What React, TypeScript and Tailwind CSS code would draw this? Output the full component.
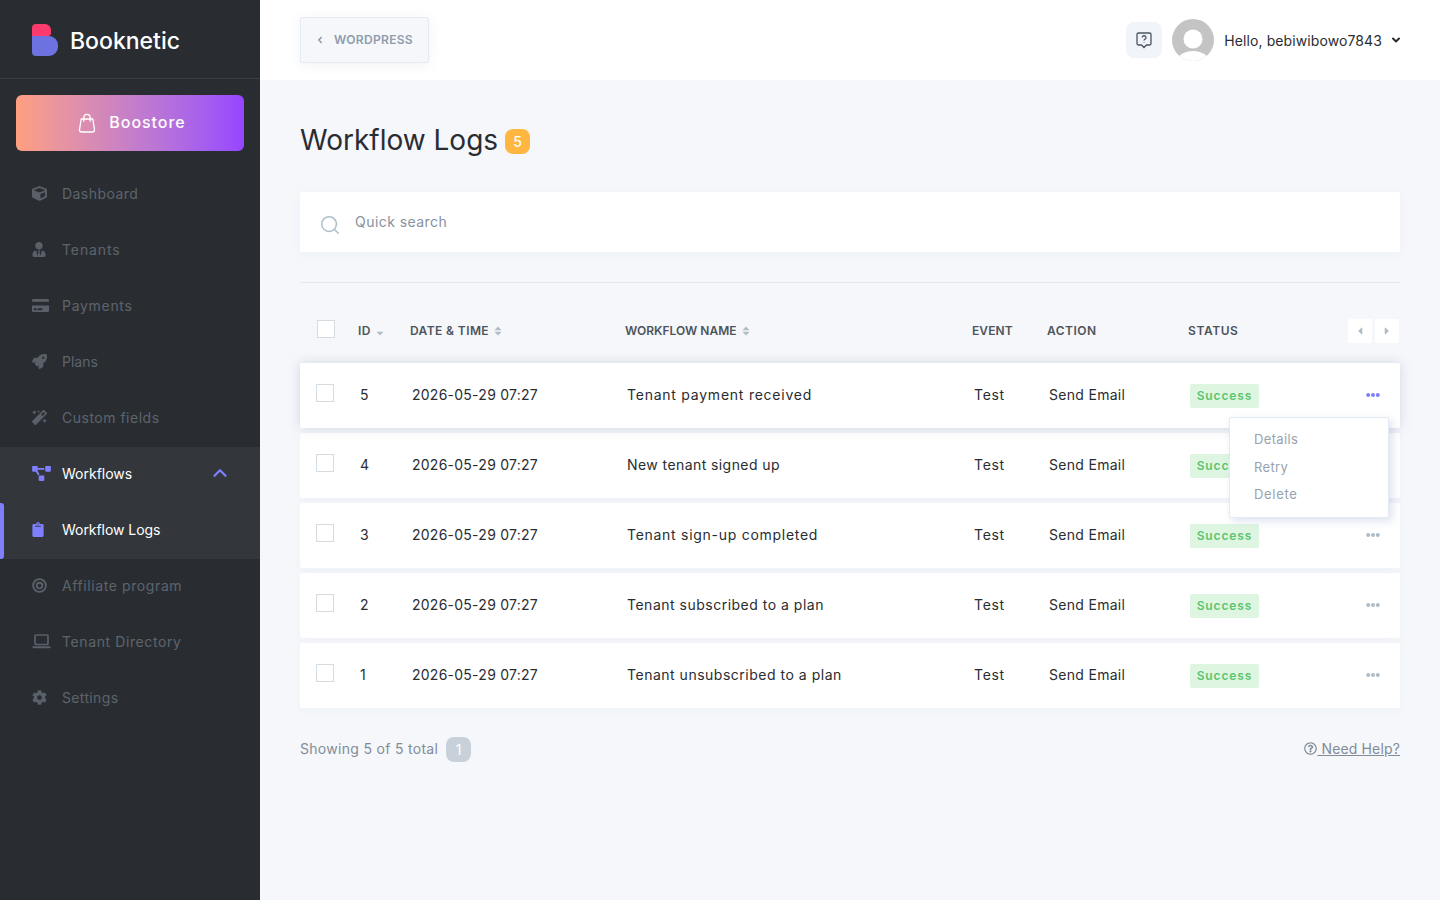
import React from "react";
import { ChevronUp, ChevronDown, ChevronLeft, Search } from "lucide-react";
import { FaCube, FaUserTie, FaCreditCard, FaRocket, FaMagic, FaProjectDiagram, FaClipboard, FaCog, FaEllipsisH, FaCaretLeft, FaCaretRight, FaRegQuestionCircle } from "react-icons/fa";

const font = "font-['Inter',sans-serif]";

function TargetIcon() {
  return (
    <svg width="15" height="15" viewBox="0 0 16 16" fill="none" stroke="#596068">
      <circle cx="8" cy="8" r="6.8" strokeWidth="2" />
      <circle cx="8" cy="8" r="3" strokeWidth="2" />
    </svg>
  );
}

function LaptopIcon() {
  return (
    <svg width="19" height="15" viewBox="0 0 19 15" fill="none">
      <rect x="3" y="1" width="13" height="9.5" rx="1" stroke="#596068" strokeWidth="1.7" />
      <path d="M0.5 12.2H18.5V13a1.2 1.2 0 0 1-1.2 1.2H1.7A1.2 1.2 0 0 1 .5 13Z" fill="#596068" />
    </svg>
  );
}

const iconCls = "w-[17px] h-[17px]";
const top = [
  { label: "Dashboard", track: "tracking-[0.45px]", icon: <FaCube className="w-[15px] h-[15px]" /> },
  { label: "Tenants", track: "tracking-[0.9px]", icon: <FaUserTie className="w-[14px] h-[15px]" /> },
  { label: "Payments", track: "tracking-[0.7px]", icon: <FaCreditCard className={iconCls} /> },
  { label: "Plans", track: "tracking-[0px]", icon: <FaRocket className="w-[15px] h-[15px]" /> },
  { label: "Custom fields", track: "tracking-[0.5px]", icon: <FaMagic className="w-[15px] h-[15px]" /> },
];
const bottom = [
  { label: "Affiliate program", track: "tracking-[0.6px]", icon: <TargetIcon /> },
  { label: "Tenant Directory", track: "tracking-[0.6px]", icon: <LaptopIcon /> },
  { label: "Settings", track: "tracking-[0.35px]", icon: <FaCog className="w-[15px] h-[15px]" /> },
];

function NavItem({ label, icon, track }: { label: string; icon: React.ReactNode; track: string }) {
  return (
    <div className="h-14 pl-8 pb-[4px] flex items-center text-[#596068]">
      <span className="w-[30px] flex items-center shrink-0">{icon}</span>
      <span className={`text-[14px] text-[#5d646c] ${track}`}>{label}</span>
    </div>
  );
}

function Sort({ only }: { only?: boolean }) {
  return (
    <svg width="8" height="10" viewBox="0 0 8 10" fill="#adbcc6" className="ml-[5px]">
      {!only && <path d="M4 0.5 7.5 4.2H0.5Z" />}
      <path d="M4 9.5 7.5 5.8H0.5Z" />
    </svg>
  );
}

const rows = [
  ["5", "Tenant payment received", "tracking-[0.76px]"],
  ["4", "New tenant signed up", "tracking-[0.42px]"],
  ["3", "Tenant sign-up completed", "tracking-[0.72px]"],
  ["2", "Tenant subscribed to a plan", "tracking-[0.5px]"],
  ["1", "Tenant unsubscribed to a plan", "tracking-[0.51px]"],
];

function Row({ id, name, track, active }: { id: string; name: string; track: string; active?: boolean }) {
  return (
    <div className={`relative h-[65px] bg-white rounded-[2px] flex items-center pl-4 text-[14px] text-[#292d32] ${active ? "shadow-[0_0_12px_rgba(90,100,130,0.22)] z-10" : "shadow-[0_2px_8px_rgba(120,130,160,0.05)]"}`}>
      <span className="w-11 shrink-0"><span className="block w-[18px] h-[18px] border border-[#d4dbe1] -mt-[5px]" /></span>
      <span className="w-[52px] shrink-0 mb-[2px]">{id}</span>
      <span className="w-[215px] shrink-0 mb-[2px] tracking-[0.25px]">2026-05-29 07:27</span>
      <span className={`w-[347px] shrink-0 mb-[2px] ${track}`}>{name}</span>
      <span className="w-[75px] shrink-0 mb-[2px] tracking-[0.7px]">Test</span>
      <span className="w-[141px] shrink-0 mb-[2px] tracking-[0.3px]">Send Email</span>
      <span className="w-[69px] h-6 shrink-0 bg-[#def6e1] rounded-[2px] flex items-center justify-center text-[12px] font-semibold text-[#5bc46f] tracking-[0.9px]">Success</span>
      <span className={`ml-[107px] mb-[2px] ${active ? "text-[#7f7ffb]" : "text-[#adbcc6]"}`}><FaEllipsisH className="w-[14px] h-[14px]" /></span>
      {active && (
        <div className="absolute z-20 top-[54px] right-[11px] w-[160px] h-[101px] bg-white border border-[#e4eaf3] rounded-[2px] shadow-[3px_3px_8px_rgba(120,140,190,0.25)] pl-6 pt-3 text-[13px] text-[#97a2b0]">
          <div className="h-[19px] leading-[19px] tracking-[0.35px]">Details</div>
          <div className="h-[19px] leading-[19px] mt-[9px] tracking-[0.35px]">Retry</div>
          <div className="h-[19px] leading-[19px] mt-[8px] tracking-[0.7px]">Delete</div>
        </div>
      )}
    </div>
  );
}

function HeadCell({ w, children }: { w: string; children: React.ReactNode }) {
  return <span className={`${w} shrink-0 flex items-center`}>{children}</span>;
}

export default function App() {
  return (
    <div className={`${font} flex w-full min-h-[900px] bg-[#f5f7fb]`}>
      <aside className="w-[260px] shrink-0 bg-[#292d32] min-h-[900px]">
        <div className="h-[79px] border-b border-[#3a3e43] pl-8 flex items-center">
          <svg width="26" height="32" viewBox="0 0 26 32" className="mr-3 mt-[1px]">
            <path d="M0 12H17a9 9 0 0 1 9 9v2a9 9 0 0 1-9 9H4a4 4 0 0 1-4-4Z" fill="#6c72e0" />
            <path d="M4 0H13a6 6 0 0 1 6 6v3a3 3 0 0 1-3 3H0V4a4 4 0 0 1 4-4Z" fill="#fb3a6e" />
          </svg>
          <span className="text-[23px] font-medium text-white leading-none mt-[5px]">Booknetic</span>
        </div>
        <div className="mx-4 mt-4 h-14 pl-1 pb-[3px] rounded-[6px] bg-gradient-to-r from-[#ff9f7f] to-[#9645ff] flex items-center justify-center text-white">
          <svg width="18" height="20" viewBox="0 0 18 20" fill="none" stroke="currentColor" strokeWidth="1.3" className="mr-[13px] mt-[2px]">
            <path d="M3.2 6h11.6l1.7 10.6a2 2 0 0 1-2 2.4H3.5a2 2 0 0 1-2-2.4Z" strokeLinejoin="round" />
            <path d="M5.8 8.2V4.5a3.2 3.2 0 0 1 6.4 0v3.7" strokeLinecap="round" />
          </svg>
          <span className="text-[16px] font-medium tracking-[0.95px]">Boostore</span>
        </div>
        <nav className="mt-4">
          {top.map((n) => <NavItem key={n.label} {...n} />)}
          <div className="h-14 pl-8 pr-[29px] pb-[4px] flex items-center bg-[#33373c] text-[#7f7ffb]">
            <span className="w-[30px] flex items-center shrink-0"><FaProjectDiagram className="w-[19px] h-[15px]" /></span>
            <span className="text-[14px] tracking-[0px] text-white flex-1">Workflows</span>
            <ChevronUp className="w-[22px] h-[22px]" strokeWidth={2.5} />
          </div>
          <div className="relative h-14 pl-8 pb-[4px] flex items-center bg-[#33373c] text-[#7f7ffb]">
            <span className="absolute left-0 top-0 bottom-0 w-1 rounded-r-[3px] bg-[#7f7ffb]" />
            <span className="w-[30px] flex items-center shrink-0"><FaClipboard className="w-[12px] h-[15px]" /></span>
            <span className="text-[14px] tracking-[-0.05px] text-white">Workflow Logs</span>
          </div>
          {bottom.map((n) => <NavItem key={n.label} {...n} />)}
        </nav>
      </aside>

      <main className="flex-1 min-w-0">
        <header className="h-20 bg-white pl-10 pr-10 flex items-center justify-between">
          <div className="w-[129px] h-[46px] bg-[#f5f7fb] border border-[#e6ebf3] rounded-[2px] shadow-[0_2px_12px_rgba(120,130,170,0.1)] flex items-center pl-[14px] text-[#8f9cab]">
            <ChevronLeft className="w-[10px] h-[10px] mr-[9px]" strokeWidth={4} />
            <span className="text-[12px] font-semibold tracking-[0.3px]">WORDPRESS</span>
          </div>
          <div className="flex items-center">
            <div className="w-9 h-9 rounded-[8px] bg-[#f1f4f9] flex items-center justify-center">
              <svg width="18" height="18" viewBox="0 0 18 18" fill="none" stroke="#4a5560" strokeWidth="1.3">
                <path d="M3.5 2h11A1.5 1.5 0 0 1 16 3.5v9a1.5 1.5 0 0 1-1.5 1.5h-3L9 16.5 6.5 14h-3A1.5 1.5 0 0 1 2 12.5v-9A1.5 1.5 0 0 1 3.5 2Z" />
                <path d="M7.2 6.6a1.9 1.9 0 1 1 2.6 1.8c-.6.3-.8.6-.8 1.2" />
                <path d="M9 11.2v.6" />
              </svg>
            </div>
            <svg width="42" height="42" viewBox="0 0 42 42" className="ml-[10px]">
              <defs><clipPath id="av"><circle cx="21" cy="21" r="21" /></clipPath></defs>
              <g clipPath="url(#av)">
                <rect width="42" height="42" fill="#c4c4c4" />
                <circle cx="21" cy="20" r="9.5" fill="#fff" />
                <ellipse cx="21" cy="44" rx="17" ry="12" fill="#fff" />
              </g>
            </svg>
            <span className="ml-[10px] text-[14px] text-[#292d32] tracking-[0.1px]">Hello, bebiwibowo7843</span>
            <ChevronDown className="w-[12px] h-[12px] ml-[8px] -mr-[2px] text-[#292d32]" strokeWidth={4} />
          </div>
        </header>

        <section className="px-10">
          <div className="h-[112px] pt-[7px] flex items-center">
            <h1 className="text-[28px] font-normal text-[#292d32] leading-none">Workflow Logs</h1>
            <span className="ml-[7px] mt-1 w-[25px] h-[25px] rounded-[8px] bg-[#ffb741] text-white text-[14px] font-medium flex items-center justify-center">5</span>
          </div>
          <div className="h-[60px] bg-white shadow-[0_2px_10px_rgba(120,130,160,0.06)] rounded-[2px] flex items-center pl-[19px]">
            <Search className="w-[22px] h-[22px] text-[#adc0ca] mt-[6px] mr-[14px]" strokeWidth={1.7} />
            <span className="text-[14px] text-[#87929f] tracking-[0.45px] mb-[2px]">Quick search</span>
          </div>
          <div className="mt-[30px] border-t border-[#e4e8ee]" />
          <div className="h-[80px] pl-[17px] pt-[15px] flex items-center text-[12px] font-semibold text-[#4d545b] relative">
            <HeadCell w="w-[41px]"><span className="block w-[18px] h-[18px] bg-white border border-[#d4dbe1] -mt-1" /></HeadCell>
            <HeadCell w="w-[52px]"><span className="tracking-[0.45px]">ID</span><Sort only /></HeadCell>
            <HeadCell w="w-[215px]"><span className="tracking-[0.4px]">DATE &amp; TIME</span><Sort /></HeadCell>
            <HeadCell w="w-[347px]"><span className="tracking-[0px]">WORKFLOW NAME</span><Sort /></HeadCell>
            <HeadCell w="w-[75px]"><span className="tracking-[0.1px]">EVENT</span></HeadCell>
            <HeadCell w="w-[141px]"><span className="tracking-[0.5px]">ACTION</span></HeadCell>
            <HeadCell w="w-[160px]"><span className="tracking-[0.6px]">STATUS</span></HeadCell>
            <span className="w-6 h-6 bg-white rounded-[2px] flex items-center justify-center text-[#adbcc6]"><FaCaretLeft className="w-[12px] h-[12px]" /></span>
            <span className="w-6 h-6 ml-[3px] bg-white rounded-[2px] flex items-center justify-center text-[#adbcc6]"><FaCaretRight className="w-[12px] h-[12px]" /></span>
          </div>
          <div className="flex flex-col gap-[5px]">
            {rows.map((r, i) => <Row key={r[0]} id={r[0]} name={r[1]} track={r[2]} active={i === 0} />)}
          </div>
          <div className="mt-[29px] h-6 flex items-center justify-between text-[14px] text-[#828d99]">
            <div className="flex items-center">
              <span className="tracking-[0.3px] mb-[2px]">Showing 5 of 5 total</span>
              <span className="ml-2 w-[25px] h-[25px] rounded-[8px] bg-[#c8d0da] text-white flex items-center justify-center">1</span>
            </div>
            <div className="flex items-center mb-[2px]">
              <FaRegQuestionCircle className="w-[13px] h-[13px]" />
              <span className="underline whitespace-pre tracking-[0.15px]"> Need Help?</span>
            </div>
          </div>
        </section>
      </main>
    </div>
  );
}
